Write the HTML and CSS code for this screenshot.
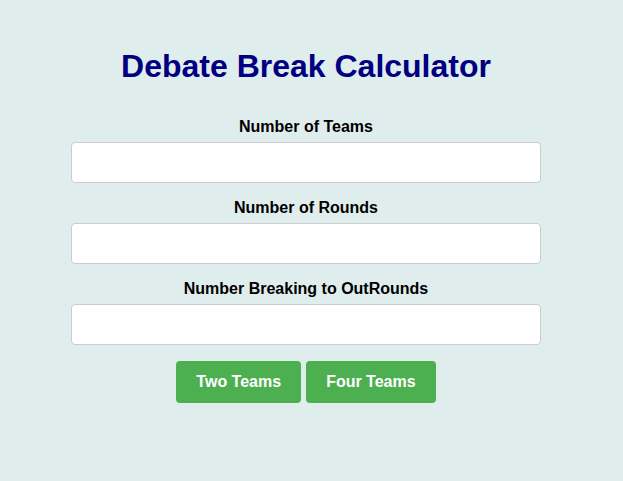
FILE: index.html
```html
<!DOCTYPE html>
<html lang="en">
<head>
<meta charset="utf-8">
<title>Debate Break Calculator</title>
<link rel="stylesheet" href="styles.css">
</head>
<body>
<main class="calc">
  <h1 class="calc-title">Debate Break Calculator</h1>
  <div class="field">
    <label class="field-label" for="teams">Number of Teams</label>
    <input class="field-input" id="teams" type="text">
  </div>
  <div class="field">
    <label class="field-label" for="rounds">Number of Rounds</label>
    <input class="field-input" id="rounds" type="text">
  </div>
  <div class="field">
    <label class="field-label" for="breaking">Number Breaking to OutRounds</label>
    <input class="field-input" id="breaking" type="text">
  </div>
  <div class="actions">
    <button class="btn" type="button">Two Teams</button>
    <button class="btn" type="button">Four Teams</button>
  </div>
</main>
</body>
</html>
```

FILE: styles.css
```css
html, body {
  margin: 0;
  height: 100%;
}
body {
  background: #e0eded;
  font-family: "Liberation Sans", Arial, sans-serif;
  padding: 48px 11px 0 0;
  box-sizing: border-box;
}
.calc {
  width: 470px;
  margin: 0 auto;
  display: flex;
  flex-direction: column;
}
.calc-title {
  margin: 0 0 33px;
  font-size: 32px;
  line-height: 37px;
  font-weight: bold;
  color: #000080;
  text-align: center;
}
.field {
  display: flex;
  flex-direction: column;
  margin-bottom: 16px;
}
.field-label {
  display: block;
  font-size: 16px;
  line-height: 18px;
  font-weight: bold;
  color: #000;
  text-align: center;
  margin-bottom: 6px;
}
.field-input {
  box-sizing: border-box;
  width: 100%;
  height: 41px;
  margin: 0;
  padding: 0 10px;
  border: 1px solid #cccccc;
  border-radius: 4px;
  background: #fff;
  font-family: inherit;
  font-size: 16px;
}
.actions {
  display: flex;
  justify-content: center;
  gap: 5px;
}
.btn {
  background: #4caf50;
  color: #fff;
  border: none;
  border-radius: 4px;
  padding: 12px 20px;
  font-family: inherit;
  font-size: 16px;
  line-height: 18px;
  font-weight: bold;
  cursor: pointer;
}
```
